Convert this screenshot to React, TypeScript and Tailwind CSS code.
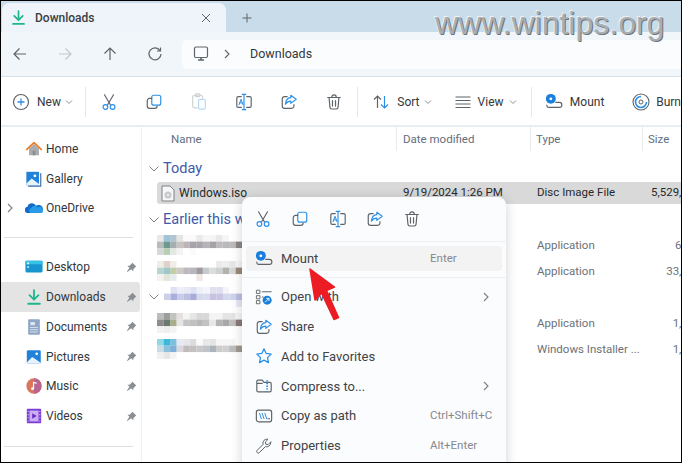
import type { ReactNode } from 'react'

const gray = '#5f6469'
const blue = '#2b8fe8'

function Ico({ size = 18, children, className }: { size?: number; children: ReactNode; className?: string }) {
    return (
        <svg width={size} height={size} viewBox="0 0 20 20" fill="none" strokeWidth="1.3" strokeLinecap="round" strokeLinejoin="round" className={`shrink-0 ${className ?? ''}`}>
            {children}
        </svg>
    )
}

const Scissors = () => (
    <Ico>
        <path d="M5 2l6.500 11M15 2L8.500 13" stroke={gray} />
        <circle cx="6" cy="15.500" r="2.600" stroke={blue} />
        <circle cx="14" cy="15.500" r="2.600" stroke={blue} />
    </Ico>
)
const CopyIcon = () => (
    <Ico>
        <rect x="7.500" y="2.500" width="10" height="11" rx="2.200" stroke={blue} />
        <path d="M7.500 6H5a2.500 2.500 0 0 0-2.500 2.500v6A2.500 2.500 0 0 0 5 17h6a2.500 2.500 0 0 0 2.500-2.500" stroke={gray} />
    </Ico>
)
const PasteIcon = () => (
    <Ico>
        <path d="M8 16.500H5a2 2 0 0 1-2-2v-10a2 2 0 0 1 2-2h7a2 2 0 0 1 2 2v1" stroke="#cdd2d6" />
        <rect x="6" y="1" width="5" height="3" rx="1" stroke="#cdd2d6" />
        <rect x="9.500" y="7" width="7.500" height="11" rx="1.600" stroke="#b5d8f6" />
    </Ico>
)
const RenameIcon = () => (
    <Ico>
        <path d="M7 4H3.500A1.500 1.500 0 0 0 2 5.500v9A1.500 1.500 0 0 0 3.500 16H7M13 4h3.500A1.500 1.500 0 0 1 18 5.500v9a1.500 1.500 0 0 1-1.500 1.500H13" stroke={gray} />
        <path d="M10 1.500v17M8 1.500h4M8 18.500h4" stroke={blue} />
        <path d="M4.500 13l2.200-6 2.200 6M5.300 11h2.800" stroke={blue} strokeWidth="1.100" />
    </Ico>
)
const ShareIcon = () => (
    <Ico>
        <path d="M8 4H5a2.500 2.500 0 0 0-2.500 2.500v8A2.500 2.500 0 0 0 5 17h8a2.500 2.500 0 0 0 2.500-2.500V13" stroke={gray} />
        <path d="M12 2.500l6 4.500-6 4.500V9c-3 0-4.500 1-6 3.500C6.300 8.500 8.500 5.500 12 5.200z" stroke={blue} />
    </Ico>
)
const TrashIcon = () => (
    <Ico>
        <path d="M3 5h14M7.500 4.500a2.500 2.500 0 0 1 5 0M4.500 5l1 11a2 2 0 0 0 2 1.800h5a2 2 0 0 0 2-1.800l1-11M8.300 8.500v6M11.700 8.500v6" stroke={gray} />
    </Ico>
)
const MountIcon = () => (
    <Ico>
        <circle cx="6.500" cy="6.500" r="5.500" fill="#1a7fdc" />
        <circle cx="6.500" cy="6.500" r="1.600" fill="#fff" />
        <path d="M2 13.500v.5a2 2 0 0 0 2 2h12a2 2 0 0 0 0-5.500h-4" stroke={gray} />
    </Ico>
)
const Chevron = ({ className }: { className?: string }) => (
    <svg width="8" height="6" viewBox="0 0 8 6" fill="none" className={className}>
        <path d="M1 1.500l3 3 3-3" stroke="#8d9297" strokeWidth="1" />
    </svg>
)
const DownArrow = ({ size = 18 }: { size?: number }) => (
    <Ico size={size}>
        <path d="M10 2.500v10M5 8l5 5 5-5" stroke="#1fb58f" strokeWidth="2" />
        <path d="M3.500 17.500h13" stroke="#1fb58f" strokeWidth="2" />
    </Ico>
)
const Pin = () => (
    <svg width="11" height="11" viewBox="0 0 12 12" className="shrink-0">
        <path d="M7 0.800l4.200 4.200-1.100.6-2 2.200-.2 2.400-2.300-2.300L1.500 11 1 10.500 3.700 6.400 1.500 4.200l2.400-.2 2.200-2z" fill="#8a8f94" />
    </svg>
)

const HomeIcon = () => (
    <Ico>
        <path d="M4.500 9.500V17h11V9.500L10 4.500z" fill="#a9abae" />
        <rect x="8.500" y="12" width="3" height="5" fill="#8b8d90" />
        <path d="M2 10.500L10 3l8 7.500" stroke="#e8812b" strokeWidth="2" />
    </Ico>
)
const GalleryIcon = () => (
    <Ico>
        <rect x="1.500" y="2" width="14" height="15" fill="#1f82d8" />
        <circle cx="11" cy="6.500" r="1.600" fill="#fff" />
        <path d="M1.500 15l6-5.500 8 6V17h-14z" fill="#e8f2fb" />
        <path d="M17.500 4v14H4" stroke="#3d6ea8" strokeWidth="1.300" />
    </Ico>
)
const CloudIcon = () => (
    <Ico>
        <path d="M2 15.500a3.500 3.500 0 0 1 .8-6.800 5 5 0 0 1 9.400-1.200 4.300 4.300 0 0 1 5.800 8z" fill="#0f6cc9" />
        <path d="M6 15.500a3 3 0 0 1 1-5.500 4 4 0 0 1 7-.6 3.300 3.300 0 0 1 4.500 6.100z" fill="#2a9be8" />
    </Ico>
)
const DesktopIcon = () => (
    <Ico>
        <rect x="0.500" y="3" width="19" height="13" rx="1.200" fill="#1795cf" />
        <rect x="0.500" y="3" width="19" height="4" rx="1" fill="#35c2e4" />
        <rect x="2.500" y="5" width="2" height="2" fill="#e8fbff" />
        <rect x="2.500" y="9" width="2" height="2" fill="#bdeaf6" />
    </Ico>
)
const DocsIcon = () => (
    <Ico>
        <rect x="3.500" y="1.500" width="13" height="17" rx="1" fill="#8fa6c7" />
        <rect x="6" y="4.500" width="5" height="3.500" fill="#dfe6f0" />
        <path d="M6 10.500h8M6 13h8M6 15.500h8" stroke="#dfe6f0" strokeWidth="1" />
    </Ico>
)
const PicturesIcon = () => (
    <Ico>
        <rect x="2" y="2.500" width="15.500" height="15" rx="1.500" fill="#1f82d8" />
        <circle cx="13" cy="6.500" r="1.500" fill="#fff" />
        <path d="M2 16l6-6 9.500 6.500v1H2z" fill="#e8f2fb" />
    </Ico>
)
const MusicIcon = () => (
    <Ico>
        <circle cx="10" cy="10" r="8.500" fill="#d9765c" />
        <path d="M10 1.500a8.500 8.500 0 0 1 0 17z" fill="#b8668f" />
        <path d="M9.500 13V6l3 .8" stroke="#fff" strokeWidth="1.300" />
        <circle cx="8.300" cy="13" r="1.500" fill="#fff" />
    </Ico>
)
const VideosIcon = () => (
    <Ico>
        <rect x="2" y="2" width="16" height="16" rx="1" fill="#7c3fd6" />
        <rect x="5" y="4" width="10" height="12" fill="#c9b0f2" />
        <path d="M8 7l5 3-5 3z" fill="#6a2cc4" />
        <path d="M3.500 5h0M3.500 8.500h0M3.500 12h0M3.500 15.500h0M16.500 5h0M16.500 8.500h0M16.500 12h0M16.500 15.500h0" stroke="#e9defa" strokeWidth="1.200" />
    </Ico>
)

const navTop = [
    { label: 'Home', icon: <HomeIcon /> },
    { label: 'Gallery', icon: <GalleryIcon /> },
    { label: 'OneDrive', icon: <CloudIcon />, expand: true },
]
const navPinned = [
    { label: 'Desktop', icon: <DesktopIcon /> },
    { label: 'Downloads', icon: <DownArrow />, active: true },
    { label: 'Documents', icon: <DocsIcon /> },
    { label: 'Pictures', icon: <PicturesIcon /> },
    { label: 'Music', icon: <MusicIcon /> },
    { label: 'Videos', icon: <VideosIcon /> },
]

function NavRow({ label, icon, expand, active, pinned }: { label: string; icon: ReactNode; expand?: boolean; active?: boolean; pinned?: boolean }) {
    return (
        <div className={`flex h-[29.800px] w-[139px] items-center rounded-r-[3px] ${active ? 'bg-[#e4e4e4]' : ''}`}>
            <span className="flex w-[24px] pl-[6px]">
                {expand && (
                    <svg width="6" height="10" viewBox="0 0 6 10" fill="none">
                        <path d="M1 1l4 4-4 4" stroke="#7a7f84" strokeWidth="1.100" />
                    </svg>
                )}
            </span>
            <span className="w-[21px]">{icon}</span>
            <span className="flex-1 text-[12px] text-[#33373b]">{label}</span>
            {pinned && <span className="pr-[3px]"><Pin /></span>}
        </div>
    )
}

// mosaic over the hidden file names, one row of hex colours per band
function Mosaic({ cells }: { cells: string[][] }) {
    return (
        <svg width="85" height="20" viewBox="0 0 85 20" className="blur-[0.4px]">
            {cells.map((row, r) =>
                row.map((c, i) => <rect key={`${r}-${i}`} x={i * 6.55} y={r * 6.6} width="6.600" height="6.700" fill={c} />),
            )}
        </svg>
    )
}

const m1 = [
    ['#e9eae8', '#9dc4d8', '#b0c4d4', '#e4e4e2', '#fafafa', '#fafafa', '#eceae8', '#f6f6f6', '#f4f4f4', '#e9e9ea', '#f5f5f5', '#ffffff', '#ffffff'],
    ['#b9bbb9', '#6d9a90', '#a7aeb0', '#c9c4c4', '#bcb4b6', '#a6a4aa', '#a8a6ab', '#b6b4b8', '#a6a3a8', '#bcbbbd', '#b9b8bb', '#bbbbbb', '#8d8686'],
    ['#d6d8d8', '#b9cfb4', '#e2e8e2', '#f3f3f3', '#ffffff', '#fafafa', '#ffffff', '#ffffff', '#ffffff', '#ffffff', '#ffffff', '#ffffff', '#ffffff'],
]
const m2 = [
    ['#efefe8', '#dfd2cc', '#f0ece8', '#ffffff', '#ffffff', '#ffffff', '#ffffff', '#ffffff', '#ffffff', '#eaeaea', '#eeeeee', '#e6e6e6', '#f6f6f6'],
    ['#b9d4cf', '#9cc8cc', '#c0cfa8', '#cfc9c8', '#bcb8bc', '#b8b5bb', '#9f9aa0', '#c6cbd0', '#dcdedd', '#d0d2d2', '#b2b3ad', '#d6d6d6', '#9a8a7a'],
    ['#f2f2f2', '#e0e6d8', '#e6ecec', '#ffffff', '#ffffff', '#ffffff', '#efe8e6', '#ffffff', '#ffffff', '#ffffff', '#ffffff', '#ffffff', '#ffffff'],
]
const m3 = [
    ['#ffffff', '#dfe2f2', '#eceef8', '#e8eaf6', '#dfe2f2', '#eef0f8', '#f4f4fa', '#e0e0f0', '#e0dff0', '#f4f4fa', '#ffffff', '#ffffff', '#ffffff'],
    ['#cdd0ea', '#a9aedb', '#c8cce6', '#bcc0e2', '#a8acd8', '#d6d8ee', '#d8daee', '#c6c2e0', '#c8c4e2', '#d4d8ee', '#d0d4ec', '#bcc0e0', '#bcbcd8'],
    ['#ffffff', '#ffffff', '#ffffff', '#ffffff', '#ffffff', '#ffffff', '#ffffff', '#ffffff', '#ffffff', '#ffffff', '#ffffff', '#e6e8f4', '#ffffff'],
]
const m4 = [
    ['#bcbcbc', '#9b9f9c', '#c0c4c0', '#e4e0e0', '#f4f4f4', '#e6e6e6', '#d8d8d8', '#d8d8d8', '#f4f4f4', '#f4f4f4', '#e4e4e4', '#e4e4e4', '#f6f6f6'],
    ['#8c8c8c', '#6a7a70', '#a7ae88', '#e4e6e6', '#c4c4c4', '#c0c0c0', '#b8b8b8', '#c2c2c2', '#e8e8e8', '#b4b4b4', '#a8a8a8', '#c0c0c0', '#8a7a7a'],
    ['#f2f2f2', '#eeeeee', '#f4f4f4', '#ffffff', '#ffffff', '#ffffff', '#ffffff', '#ffffff', '#ffffff', '#ffffff', '#ffffff', '#ffffff', '#ffffff'],
]
const m5 = [
    ['#90d8e4', '#3cb8d8', '#7cc0dc', '#e6eaf0', '#e6e6ea', '#dcdce0', '#fafafa', '#e8e8e8', '#e4e4e4', '#f6f6f6', '#f6f6f6', '#f6f6f6', '#ffffff'],
    ['#c8dce4', '#8cc0de', '#7cb0d8', '#d8d8dc', '#c0bcbc', '#c4c0c0', '#c8c8c8', '#c0c4c8', '#aab4bc', '#cccccc', '#d0d0d0', '#bdbdbd', '#a09a90'],
    ['#f0f0f0', '#e6e6e6', '#f4f4f4', '#ffffff', '#ffffff', '#ffffff', '#ffffff', '#ffffff', '#ffffff', '#ffffff', '#ffffff', '#ffffff', '#ffffff'],
]

function FileRow({ cells, type, size, marginTop }: { cells: string[][]; type: string; size: string; marginTop: string }) {
    return (
        <div className={`grid h-[20px] grid-cols-[254px_134px_112px_76px] items-center ${marginTop}`}>
            <div className="pl-[15px]"><Mosaic cells={cells} /></div>
            <div />
            <div className="pl-[7px] pt-[2px] text-[11.500px] text-[#6d7175]">{type}</div>
            <div className="whitespace-nowrap pt-[2px] text-right text-[11.500px] text-[#6d7175]">{size}</div>
        </div>
    )
}

function GroupHead({ label, marginTop }: { label: string; marginTop: string }) {
    return (
        <div className={`flex h-[20px] items-center pl-[7px] ${marginTop}`}>
            <svg width="10" height="6" viewBox="0 0 10 6" fill="none" className="mr-[4px]">
                <path d="M0.500 0.500L5 5l4.500-4.500" stroke="#7a7f84" strokeWidth="1" />
            </svg>
            <span className="text-[14.500px] text-[#3e5aa8]">{label}</span>
        </div>
    )
}

function MenuRow({ icon, label, shortcut, more, active }: { icon: ReactNode; label: string; shortcut?: string; more?: boolean; active?: boolean }) {
    return (
        <div className={`flex items-center rounded-[4px] pl-[9px] pr-[13px] ${active ? 'h-[25px] bg-[#f3f3f3]' : 'h-[29.800px]'}`}>
            <span className="w-[26px]">{icon}</span>
            <span className="flex-1 text-[13px] text-[#3f4347]">{label}</span>
            {shortcut && <span className="w-[59px] whitespace-nowrap text-[11.500px] text-[#85898d]">{shortcut}</span>}
            {more && (
                <svg width="6" height="10" viewBox="0 0 6 10" fill="none">
                    <path d="M1 1l4 4-4 4" stroke="#7a7f84" strokeWidth="1.100" />
                </svg>
            )}
        </div>
    )
}

export default function App() {
    return (
        <div className="relative flex h-[463px] w-[682px] flex-col overflow-hidden border border-black bg-white font-['Roboto',sans-serif]">
            {/* Tabs */}
            <div className="flex h-[31px] shrink-0 items-end bg-[#c9dce9] pl-px">
                <div className="flex h-[29px] w-[224px] items-center rounded-t-[7px] bg-[#eef4f9] pl-[8px] pr-[15px]">
                    <DownArrow size={17} />
                    <span className="ml-[8px] flex-1 text-[12px] font-medium text-[#3a3e42]">Downloads</span>
                    <svg width="10" height="10" viewBox="0 0 10 10" fill="none">
                        <path d="M1 1l8 8M9 1L1 9" stroke="#5f6469" strokeWidth="1" />
                    </svg>
                </div>
                <div className="mb-[9px] ml-[16px]">
                    <svg width="10" height="10" viewBox="0 0 10 10" fill="none">
                        <path d="M5 0.500v9M0.500 5h9" stroke="#5f6469" strokeWidth="1" />
                    </svg>
                </div>
            </div>

            {/* Address bar */}
            <div className="flex h-[45px] shrink-0 items-center border-b border-[#d9e1e8] bg-[#f1f6fa] pl-[11px]">
                <div className="flex w-[170px] items-center gap-[29px]">
                    <svg width="16" height="16" viewBox="0 0 16 16" fill="none"><path d="M14 8H2M7.500 2.500L2 8l5.500 5.500" stroke="#5f6469" strokeWidth="1.200" /></svg>
                    <svg width="16" height="16" viewBox="0 0 16 16" fill="none"><path d="M2 8h12M8.500 2.500L14 8l-5.500 5.500" stroke="#c2c7cb" strokeWidth="1.200" /></svg>
                    <svg width="16" height="16" viewBox="0 0 16 16" fill="none"><path d="M8 14V2M2.500 7.500L8 2l5.500 5.500" stroke="#5f6469" strokeWidth="1.200" /></svg>
                    <svg width="16" height="16" viewBox="0 0 16 16" fill="none"><path d="M13 4.500A6 6 0 1 0 14 8M13.500 1.500v3.500H10" stroke="#5f6469" strokeWidth="1.200" /></svg>
                </div>
                <div className="flex h-[29px] flex-1 items-center rounded-l-[5px] bg-[#fafcfe] pl-[11px]">
                    <svg width="16" height="16" viewBox="0 0 16 16" fill="none">
                        <rect x="1.500" y="1" width="13" height="10.500" rx="1.500" stroke="#5f6469" strokeWidth="1.200" />
                        <path d="M5 14h6M8 11.500V14" stroke="#5f6469" strokeWidth="1.600" />
                    </svg>
                    <svg width="6" height="10" viewBox="0 0 6 10" fill="none" className="ml-[15px]">
                        <path d="M1 1l4 4-4 4" stroke="#5f6469" strokeWidth="1.100" />
                    </svg>
                    <span className="ml-[20px] text-[12.500px] text-[#33373b]">Downloads</span>
                </div>
            </div>

            {/* Toolbar */}
            <div className="flex h-[50px] shrink-0 items-center border-b-2 border-[#e6edf3] pl-[11px] pt-[2px]">
                <div className="flex w-[74px] items-center">
                    <svg width="18" height="18" viewBox="0 0 18 18" fill="none">
                        <circle cx="9" cy="9" r="7.500" stroke="#5f6469" strokeWidth="1.200" />
                        <path d="M9 5.500v7M5.500 9h7" stroke={blue} strokeWidth="1.300" />
                    </svg>
                    <span className="ml-[7px] text-[12px] text-[#33373b]">New</span>
                    <Chevron className="ml-[4px]" />
                </div>
                <div className="h-[30px] w-px bg-[#e4e6e8]" />
                <div className="flex items-center gap-[27px] pl-[14px] pr-[14px]">
                    <Scissors />
                    <CopyIcon />
                    <PasteIcon />
                    <RenameIcon />
                    <ShareIcon />
                    <TrashIcon />
                </div>
                <div className="h-[30px] w-px bg-[#e4e6e8]" />
                <div className="flex w-[88px] items-center pl-[14px]">
                    <svg width="18" height="18" viewBox="0 0 18 18" fill="none">
                        <path d="M5.500 15V3M2 6.500L5.500 3 9 6.500" stroke="#5f6469" strokeWidth="1.200" />
                        <path d="M12.500 3v12M9 11.500l3.500 3.500 3.500-3.500" stroke={blue} strokeWidth="1.200" />
                    </svg>
                    <span className="ml-[7px] text-[12px] text-[#33373b]">Sort</span>
                    <Chevron className="ml-[4px]" />
                </div>
                <div className="flex w-[86px] items-center pl-[9px]">
                    <svg width="16" height="14" viewBox="0 0 16 14" fill="none">
                        <path d="M0.500 2h15M0.500 5.500h15M0.500 9h15M0.500 12.500h15" stroke="#5f6469" strokeWidth="1" />
                    </svg>
                    <span className="ml-[7px] text-[12px] text-[#33373b]">View</span>
                    <Chevron className="ml-[5px]" />
                </div>
                <div className="h-[30px] w-px bg-[#e4e6e8]" />
                <div className="flex w-[87px] items-center pl-[13px]">
                    <MountIcon />
                    <span className="ml-[7px] text-[12px] text-[#33373b]">Mount</span>
                </div>
                <div className="flex items-center pl-[14px]">
                    <svg width="18" height="18" viewBox="0 0 18 18" fill="none">
                        <circle cx="9" cy="9" r="8" stroke="#5f6469" strokeWidth="1.100" />
                        <path d="M9 3.500A5.500 5.500 0 1 0 14.500 9" stroke={blue} strokeWidth="1.600" />
                        <circle cx="9" cy="9" r="2" stroke="#5f6469" strokeWidth="1" />
                    </svg>
                    <span className="ml-[6px] text-[12px] text-[#33373b]">Burn</span>
                </div>
            </div>

            {/* Body */}
            <div className="flex min-h-0 flex-1">
                <aside className="w-[141px] shrink-0 border-r border-[#eef0f2] pt-[7px]">
                    {navTop.map((n) => (
                        <NavRow key={n.label} {...n} />
                    ))}
                    <div className="my-[14px] ml-[3px] h-px w-[129px] bg-[#dddfe1]" />
                    {navPinned.map((n) => (
                        <NavRow key={n.label} {...n} pinned />
                    ))}
                    <div className="ml-[3px] mt-[15px] h-px w-[129px] bg-[#dddfe1]" />
                </aside>

                <main className="min-w-0 flex-1">
                    <div className="grid h-[24px] grid-cols-[254px_134px_112px_76px] items-center text-[11.500px] text-[#5f6f80]">
                        <div className="pl-[29px] pt-[1px]">Name</div>
                        <div className="flex h-full items-center border-l border-[#e8eaec] pl-[6px] pt-[1px]">
                            Date modified
                        </div>
                        <div className="flex h-full items-center border-l border-[#e8eaec] pl-[5px] pt-[1px]">Type</div>
                        <div className="flex h-full items-center border-l border-[#e8eaec] pl-[5px] pt-[1px]">Size</div>
                    </div>
                    <GroupHead label="Today" marginTop="mt-[8px]" />
                    <div className="ml-[15px] mt-[3px] grid h-[22px] grid-cols-[239px_134px_112px_76px] items-center rounded-l-[3px] bg-[#d9d9d9] text-[11.500px] text-[#26292c]">
                        <div className="flex items-center pl-[4px]">
                            <svg width="14" height="17" viewBox="0 0 14 17" fill="none" className="mr-[4px]">
                                <path d="M1 1h8l4 4v11H1z" fill="#f7f7f7" stroke="#7d8185" strokeWidth="1" />
                                <circle cx="7" cy="10" r="3.500" fill="#c8cacc" />
                                <circle cx="7" cy="10" r="1" fill="#f7f7f7" />
                            </svg>
                            <span className="text-[12px]">Windows.iso</span>
                        </div>
                        <div className="pl-[7px]">9/19/2024 1:26 PM</div>
                        <div className="pl-[7px]">Disc Image File</div>
                        <div className="whitespace-nowrap text-right">5,529,816 KB</div>
                    </div>
                    <GroupHead label="Earlier this week" marginTop="mt-[6px]" />
                    <FileRow cells={m1} type="Application" size="6128 KB" marginTop="mt-[5px]" />
                    <FileRow cells={m2} type="Application" size="33,128 KB" marginTop="mt-[6px]" />
                    <div className="mt-[6px] flex h-[20px] items-center pl-[7px]">
                        <svg width="10" height="6" viewBox="0 0 10 6" fill="none" className="mr-[5px]">
                            <path d="M0.500 0.500L5 5l4.500-4.500" stroke="#7a7f84" strokeWidth="1" />
                        </svg>
                        <Mosaic cells={m3} />
                    </div>
                    <FileRow cells={m4} type="Application" size="1,512 KB" marginTop="mt-[6px]" />
                    <FileRow cells={m5} type="Windows Installer ..." size="1,024 KB" marginTop="mt-[6px]" />
                </main>
            </div>

            {/* Context menu */}
            <div className="absolute left-[241px] top-[196px] h-[280px] w-[264px] rounded-[8px] bg-[#fbfcfd] shadow-[0_2px_12px_rgba(0,0,0,0.18)]">
                <div className="flex h-[44px] items-center gap-[19.300px] pl-[12px]">
                    <Scissors />
                    <CopyIcon />
                    <RenameIcon />
                    <ShareIcon />
                    <TrashIcon />
                </div>
                <div className="h-px bg-[#eff0f1]" />
                <div className="px-[4px] pt-[4px]">
                    <MenuRow icon={<MountIcon />} label="Mount" shortcut="Enter" active />
                </div>
                <div className="mt-[6px] h-px bg-[#eff0f1]" />
                <div className="px-[4px] pt-[4px]">
                    <MenuRow
                        icon={
                            <Ico>
                                <rect x="2" y="2.500" width="3.500" height="3.500" stroke={gray} strokeWidth="1" />
                                <rect x="2" y="8.500" width="3.500" height="3.500" stroke={gray} strokeWidth="1" />
                                <rect x="2" y="14" width="3.500" height="3.500" stroke={gray} strokeWidth="1" />
                                <path d="M8 4.200h10M8 10h1" stroke={gray} strokeWidth="1.100" />
                                <circle cx="13.500" cy="13.500" r="5" fill="#1a7fdc" />
                                <path d="M11.500 15.500l4-4M13 11.500h2.500V14" stroke="#fff" strokeWidth="1" />
                            </Ico>
                        }
                        label="Open with"
                        more
                    />
                    <MenuRow icon={<ShareIcon />} label="Share" />
                    <MenuRow
                        icon={
                            <Ico>
                                <path d="M10 2l2.400 5.200 5.600.7-4.100 3.900 1.100 5.600L10 14.600 5 17.400l1.100-5.600L2 7.900l5.600-.7z" stroke={blue} strokeWidth="1.400" />
                            </Ico>
                        }
                        label="Add to Favorites"
                    />
                    <MenuRow
                        icon={
                            <Ico>
                                <path d="M2 15V5a1.500 1.500 0 0 1 1.500-1.500H8L10 6h6.500A1.500 1.500 0 0 1 18 7.500V15a1.500 1.500 0 0 1-1.500 1.500h-13A1.500 1.500 0 0 1 2 15zM2 7h6" stroke={gray} />
                                <path d="M13.500 3.500v13" stroke={blue} strokeWidth="2" strokeDasharray="1.500 1.500" strokeLinecap="butt" />
                            </Ico>
                        }
                        label="Compress to..."
                        more
                    />
                    <MenuRow
                        icon={
                            <Ico>
                                <rect x="1.500" y="3.500" width="17" height="13" rx="2.500" stroke={gray} />
                                <path d="M5 7l2 6M8 7l2 6M11 7l2 6" stroke={blue} strokeWidth="1.100" />
                                <path d="M14.500 13h.1M16 13h.1" stroke={gray} />
                            </Ico>
                        }
                        label="Copy as path"
                        shortcut="Ctrl+Shift+C"
                    />
                    <MenuRow
                        icon={
                            <Ico>
                                <path d="M17.500 6.500a4.500 4.500 0 0 1-6 4.200l-6.800 6.800a1.800 1.800 0 0 1-2.500-2.500l6.800-6.800a4.500 4.500 0 0 1 5.500-5.700l-3 3 .5 2.500 2.500.5 3-3z" stroke={gray} strokeWidth="1.100" />
                            </Ico>
                        }
                        label="Properties"
                        shortcut="Alt+Enter"
                    />
                </div>
            </div>

            {/* Red pointer */}
            <svg width="40" height="56" viewBox="0 0 40 56" className="absolute left-[305px] top-[266px]">
                <path d="M4 2l24.500 18-8 3.500 12 27-4.500 2-12.500-26.500L9 33z" fill="#ec1c24" stroke="#ec1c24" strokeWidth="1.500" strokeLinejoin="round" />
            </svg>

            {/* Watermark */}
            <div className="absolute left-[434px] top-[-2px] font-['Liberation_Sans',sans-serif] text-[32px] text-[#a9aeb2] [text-shadow:1px_1px_0_#6f7478,-1px_-1px_0_#eef2f5]">
                www.wintips.org
            </div>
        </div>
    )
}
